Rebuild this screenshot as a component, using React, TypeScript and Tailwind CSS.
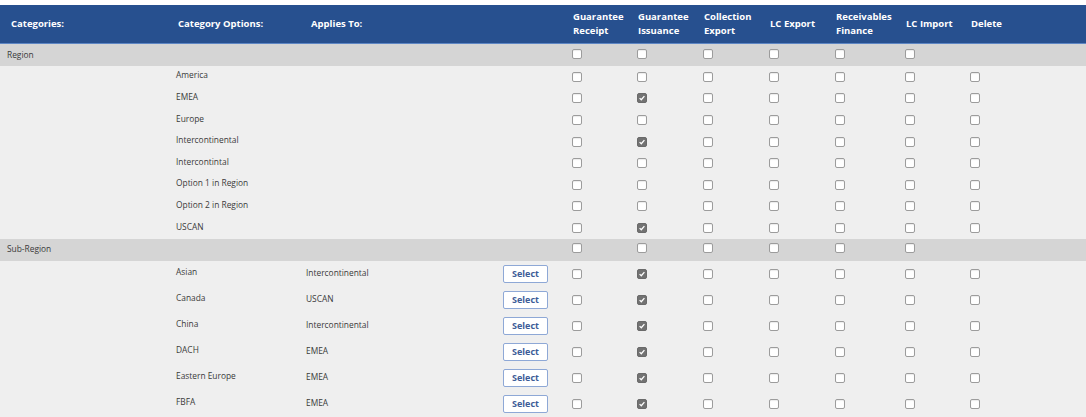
import React from "react";

const GRID =
  "grid grid-cols-[172px_132px_196px_70px_65px_66px_66px_66px_70px_65px_1fr]";

const COLS = [
  ["Guarantee", "Receipt"],
  ["Guarantee", "Issuance"],
  ["Collection", "Export"],
  ["LC Export"],
  ["Receivables", "Finance"],
  ["LC Import"],
  ["Delete"],
];

type Opt = { name: string; applies?: string; issuance?: boolean };

const regionOpts: Opt[] = [
  { name: "America" },
  { name: "EMEA", issuance: true },
  { name: "Europe" },
  { name: "Intercontinental", issuance: true },
  { name: "Intercontintal" },
  { name: "Option 1 in Region" },
  { name: "Option 2 in Region" },
  { name: "USCAN", issuance: true },
];

const subRegionOpts: Opt[] = [
  { name: "Asian", applies: "Intercontinental", issuance: true },
  { name: "Canada", applies: "USCAN", issuance: true },
  { name: "China", applies: "Intercontinental", issuance: true },
  { name: "DACH", applies: "EMEA", issuance: true },
  { name: "Eastern Europe", applies: "EMEA", issuance: true },
  { name: "FBFA", applies: "EMEA", issuance: true },
];

function Box({ checked = false }: { checked?: boolean }) {
  if (checked) {
    return (
      <span className="flex h-[10px] w-[10px] items-center justify-center rounded-[2px] border border-[#6a6a6a] bg-[#727272]">
        <svg viewBox="0 0 10 10" className="h-[8px] w-[8px]">
          <path d="M2 5.2 L4.1 7.2 L8 2.6" fill="none" stroke="#fff" strokeWidth="1.6" />
        </svg>
      </span>
    );
  }
  return (
    <span className="block h-[10px] w-[10px] rounded-[2px] border border-[#9c9c9c] bg-white shadow-[inset_0_1px_1px_rgba(0,0,0,0.08)]" />
  );
}

function GroupRow({ label }: { label: string }) {
  return (
    <div className={`${GRID} h-[22px] items-center bg-[#d5d5d5]`}>
      <div className="pl-[7px]">{label}</div>
      <div />
      <div />
      <div />
      {COLS.slice(0, 6).map((c, i) => (
        <div key={i} className="pl-[2px] -mt-[3px]">
          <Box />
        </div>
      ))}
      <div />
    </div>
  );
}

function OptRow({ opt, tall }: { opt: Opt; tall?: boolean }) {
  return (
    <div
      className={`${GRID} ${tall ? "h-[26px]" : "h-[21.6px]"} items-center bg-[#efefef]`}
    >
      <div />
      <div className="pl-[4px] -mt-[2px]">{opt.name}</div>
      <div className="pl-[2px]">{opt.applies}</div>
      <div className="pl-[3px]">
        {tall && (
          <button className="h-[18px] w-[45px] rounded-[2px] border border-[#8ea8d6] bg-white text-[9px] font-bold text-[#3d5c97]">
            Select
          </button>
        )}
      </div>
      {COLS.map((c, i) => (
        <div key={i} className="pl-[2px]">
          <Box checked={i === 1 && opt.issuance} />
        </div>
      ))}
    </div>
  );
}

export default function App() {
  return (
    <div
      className="min-h-screen bg-white pt-[5px] text-[8.4px] text-[#3a3a3a]"
      style={{ fontFamily: '"Open Sans", "Noto Sans", sans-serif' }}
    >
      <div
        className={`${GRID} h-[39px] items-center border-b border-[#5d86c4] bg-[#27508f] text-[9.5px] font-bold leading-[14px] text-white`}
      >
        <div className="pl-[11px]">Categories:</div>
        <div className="pl-[6px]">Category Options:</div>
        <div className="pl-[7px]">Applies To:</div>
        <div />
        {COLS.map((c, i) => (
          <div key={i} className="pl-[3px]">
            {c.map((l) => (
              <div key={l}>{l}</div>
            ))}
          </div>
        ))}
      </div>
      <GroupRow label="Region" />
      {regionOpts.map((o) => (
        <OptRow key={o.name} opt={o} />
      ))}
      <GroupRow label="Sub-Region" />
      {subRegionOpts.map((o) => (
        <OptRow key={o.name} opt={o} tall />
      ))}
    </div>
  );
}
